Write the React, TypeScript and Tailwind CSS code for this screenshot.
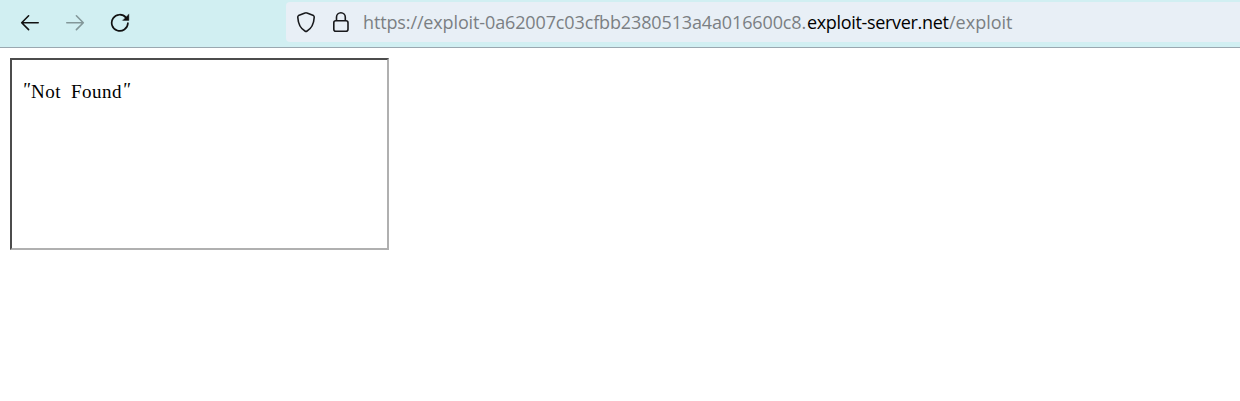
export default function App() {
  return (
    <div className="h-[401px] w-full overflow-hidden bg-white">
      <header className="flex h-12 items-start border-b border-[#9aa8b0] bg-[#d1eff2] pt-0.5">
        <nav className="flex h-10 w-[286px] shrink-0 items-center gap-[25px] pl-5 pt-0.5">
          <svg width="20" height="20" viewBox="0 0 20 20" fill="none" stroke="#111" strokeWidth="1.6" strokeLinecap="round" strokeLinejoin="round">
            <path d="M18.2 9.7H2M8.6 2.8L1.7 9.7L8.6 16.6" />
          </svg>
          <svg width="20" height="20" viewBox="0 0 20 20" fill="none" stroke="#839799" strokeWidth="1.6" strokeLinecap="round" strokeLinejoin="round">
            <path d="M1.8 9.7H18M11.4 2.8L18.3 9.7L11.4 16.6" />
          </svg>
          <svg width="20" height="20" viewBox="0 0 20 20" fill="none" stroke="#111" strokeWidth="1.7" strokeLinecap="round">
            <path d="M16 4.6A8.1 8.1 0 1 0 17.9 10.2" />
            <path d="M18.9 1.3V7.4H12.8z" fill="#111" stroke="#111" strokeWidth=".4" strokeLinejoin="round" />
          </svg>
        </nav>
        <div className="flex h-10 flex-1 items-center rounded-l bg-[#e8eff6] pl-[10px]">
          <svg width="20" height="22" viewBox="0 0 20 22" fill="none" stroke="#18191c" strokeWidth="1.6" strokeLinejoin="round" className="mr-[15px]">
            <path d="M10 1.8Q10.5 1.8 11 2.1L17.5 4.6Q18.3 5 18.2 6.5C17.8 13.3 15.2 17.8 10.8 20.2Q10 20.6 9.2 20.2C4.8 17.8 2.2 13.3 1.8 6.5Q1.7 5 2.5 4.6L9 2.1Q9.5 1.8 10 1.8Z" />
          </svg>
          <svg width="20" height="22" viewBox="0 0 20 22" fill="none" stroke="#18191c" strokeWidth="1.6" className="mr-3">
            <rect x="2.8" y="9.8" width="14.2" height="10.4" rx="2" />
            <path d="M5.5 9.8V6.2a4.4 4.4 0 0 1 8.8 0V9.8" />
          </svg>
          <div className="flex whitespace-pre pt-px font-['Open_Sans',sans-serif] text-[18px] leading-[39px] text-[#7b7f83]">
            <span className="w-[444px] tracking-[-0.13px]">https://exploit-0a62007c03cfbb2380513a4a016600c8.</span>
            <span className="w-[142px] tracking-[-0.33px] text-black">exploit-server.net</span>
            <span className="tracking-[0px]">/exploit</span>
          </div>
        </div>
      </header>
      <main className="pl-[10px] pt-[10px]">
        <div className="h-48 w-[379px] border-2 border-b-[#b0b0b0] border-l-[#4c4c4c] border-r-[#b0b0b0] border-t-[#4c4c4c] pl-[10px] pt-5">
          <pre className="flex font-['Liberation_Serif',serif] text-[19px] leading-6 text-black">
            <span className="-mt-0.5 w-[9px] italic">"</span>
            <span className="w-10 tracking-[0.5px]">Not </span>
            <span className="w-[51px] tracking-[0.5px]">Found</span>
            <span className="-mt-0.5 italic">"</span>
          </pre>
        </div>
      </main>
    </div>
  );
}
